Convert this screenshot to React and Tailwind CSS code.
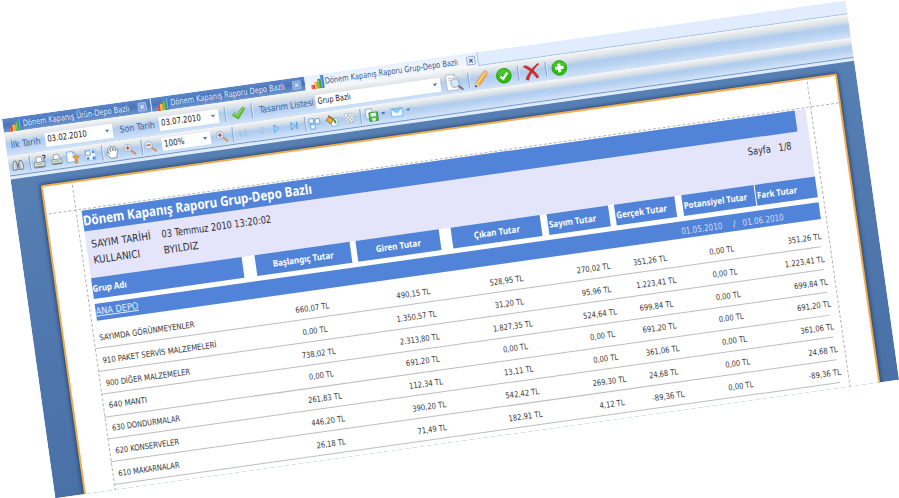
import React, { useLayoutEffect, useRef, useState } from "react";

const UI = "font-['DejaVu_Sans_Condensed','DejaVu_Sans',sans-serif]";
const HEAD = "font-['Noto_Sans',sans-serif]";

/* Single line of text condensed or expanded to a given width. */
function Fit({ w, className = "", line = "", children }) {
  const ref = useRef(null);
  const [k, setK] = useState(1);
  useLayoutEffect(() => {
    const natural = parseFloat(getComputedStyle(ref.current).width);
    if (natural > 0) setK(w / natural);
  }, [w, children]);
  return (
    <span className={`block shrink-0 ${className}`} style={{ width: w }}>
      <span
        ref={ref}
        className={`inline-block origin-left whitespace-pre align-top ${line}`}
        style={{ transform: `scaleX(${k})` }}
      >
        {children}
      </span>
    </span>
  );
}

const Sep = ({ className }) => (
  <div className={`h-[15px] w-px shrink-0 bg-[#86a8d3] shadow-[1px_0_0_#e3eefb] ${className}`} />
);

const Icon = ({ className, children, box = "0 0 16 16" }) => (
  <svg viewBox={box} className={`block shrink-0 overflow-visible ${className}`} fill="none">
    {children}
  </svg>
);

const Caret = ({ className = "" }) => (
  <svg viewBox="0 0 6 4" className={`block h-[3px] w-[5px] shrink-0 ${className}`}>
    <path d="M0 0h6L3 4z" fill="#4b7cbd" />
  </svg>
);

function Combo({ className, text, w }) {
  return (
    <div className={`flex shrink-0 items-center justify-between bg-white pl-[2px] pr-[3px] text-[#222] ${className}`}>
      <Fit w={w}>{text}</Fit>
      <Caret />
    </div>
  );
}

const Chart = ({ className }) => (
  <Icon className={`h-[13px] w-[13px] ${className}`}>
    <path d="M0 10.500h4.500V16H0z" fill="#e2482a" />
    <path d="M4 7.500h4.500V16H4z" fill="#f4a92c" />
    <path d="M8 4h4.500v12H8z" fill="#45a83d" />
    <path d="M12 0h4v16h-4z" fill="#3f7fd0" />
    <path d="M1 11.500V15M5.200 8.500V15M9.300 5v10M13.200 1v14" stroke="#fff" strokeOpacity=".5" strokeWidth=".9" />
  </Icon>
);

const Close = ({ className, dark }) => (
  <Icon className={`h-[9px] w-[9px] ${className}`} box="0 0 9 9">
    <rect x=".5" y=".5" width="8" height="8" rx="1" fill={dark ? "#7fa3da" : "#edf4fe"} stroke={dark ? "#a0bce6" : "#8fadd8"} />
    <path d="M2.700 2.700l3.600 3.600M6.300 2.700L2.700 6.300" stroke={dark ? "#dde9fa" : "#3d5f9c"} strokeWidth="1.100" />
  </Icon>
);

const Check = ({ className }) => (
  <Icon className={className}>
    <path d="M.5 9.500l3.300-2.500 2.500 2.500L13 2l3 1.500L7 15z" fill="#62c038" stroke="#439c26" strokeWidth=".6" />
    <path d="M2 9.500L4 8l2.500 3L13.500 3" stroke="#a7e37c" strokeWidth="1" />
  </Icon>
);

const Lens = ({ className, plus }) => (
  <Icon className={className}>
    <path d="M9.500 9l5.500 5.500" stroke="#c9975c" strokeWidth="2.600" strokeLinecap="round" />
    <circle cx="6" cy="5.700" r="4.800" fill="#dcebfa" stroke="#a3b3c8" strokeWidth="1.100" />
    <path d={plus ? "M3.300 5.700h5.400M6 3v5.400" : "M3.300 5.700h5.400"} stroke="#c14a3a" strokeWidth="1.600" />
  </Icon>
);

const Binoculars = ({ className }) => (
  <Icon className={className}>
    <path d="M3 2h3l1 5v7H1V9zM10 2h3l2 7v5H9V7z" fill="#c3c9d0" stroke="#6b7279" />
    <path d="M7 6h2v4H7z" fill="#6b7279" />
    <path d="M3.500 4L2.500 13M12 4l1.500 9" stroke="#f2f4f6" strokeWidth="1.200" />
  </Icon>
);

const Printer = ({ className, quick }) => (
  <Icon className={className}>
    <path d="M4 8V2h6l1 6" fill="#fff" stroke="#8a95a2" strokeWidth=".9" />
    <path d="M1.500 8h12v6h-12z" fill="#e3e7ec" stroke="#7b8590" strokeWidth=".9" />
    <path d="M2 12.500h11V14H2z" fill="#747e89" />
    <path d="M4 10.300h7" stroke="#7fb574" strokeWidth="1.200" />
    {quick && <path d="M11.500 1.500c1.800-1.500 4-.2 3 1.500-.8 1-1.500 1-1.500 2.500M13 7v1" stroke="#39434e" strokeWidth="1.300" />}
  </Icon>
);

const PageSetup = ({ className }) => (
  <Icon className={className}>
    <path d="M1 1h7l3 3v9H1z" fill="#f6faff" stroke="#7fb3e6" />
    <path d="M8 1v3h3" stroke="#7fb3e6" />
    <path d="M8 6.500c0 2 1 3 2 3V15h2.500V9.500c1.500-.3 2.500-1.500 2-3.300l-1.500 1.300-1.500-.5-.5-1.500z" fill="#f0a438" stroke="#c97c1e" strokeWidth=".7" />
  </Icon>
);

const Scale = ({ className }) => (
  <Icon className={className}>
    <path d="M1 1h14v14H1z" fill="#f3f9ff" stroke="#9cc6ee" />
    <path d="M2 2h6v6H2z" fill="#fff" stroke="#4a8fd3" />
    <path d="M10.500 10.500h4v4h-4zM10.500 2.500h3.500V6h-3.500zM2.500 10.500H6V14H2.500z" fill="#4e94d8" />
  </Icon>
);

const Hand = ({ className }) => (
  <Icon className={className}>
    <path
      d="M5 15L1 9.500c-.5-1.500 1-2 2-.8L4 10 2.500 4.500c-.2-1.500 1.500-1.700 2-.4L6 7.500 5.700 2.300c.1-1.500 1.900-1.500 2.100 0L8.500 7l1-4.500c.5-1.300 2-1 1.900.4L11 7.700l1.500-2.500c.8-1 2.200-.3 1.800.9L12.500 12l-.5 3z"
      fill="#fff"
      stroke="#7d858f"
      strokeWidth=".9"
    />
  </Icon>
);

const Arrow = ({ className, back, bar, faint }) => (
  <Icon className={className} box="0 0 10 10">
    <g transform={back ? "translate(10 0) scale(-1 1)" : undefined} opacity={faint ? 0.5 : 1}>
      <path d="M2 .8L7 5 2 9.200z" fill={faint ? "#b3d0f0" : "#a9d4fb"} stroke={faint ? "#8fb5e0" : "#55a0e6"} strokeWidth=".9" />
      {bar && <path d="M8.500.8v8.400" stroke={faint ? "#8fb5e0" : "#55a0e6"} strokeWidth="1.500" />}
    </g>
  </Icon>
);

const Pages = ({ className }) => (
  <Icon className={className}>
    <path d="M1 1h6v6H1zM9 2h6v7H9zM2 9h6v6H2z" fill="#eef6ff" stroke="#62a4e4" strokeWidth="1.100" />
    <path d="M7 3.500h2M4 7v2" stroke="#62a4e4" />
  </Icon>
);

const Bucket = ({ className }) => (
  <Icon className={className}>
    <path d="M8 5h7v10H6V9z" fill="#f4f9ff" stroke="#77a6da" />
    <path d="M0 6l5-5 5.500 5-5.500 5z" fill="#f1b33b" stroke="#8b5b1d" />
    <path d="M3 0l6 7" stroke="#5c4520" />
    <path d="M10 6c2.500 1 3.500 4 2.500 7L10 10z" fill="#369c3d" />
  </Icon>
);

const Watermark = ({ className }) => (
  <Icon className={className}>
    <path d="M1 1h10l4 4v10H1z" fill="#eef3f9" stroke="#a9bad0" />
    <path d="M2 8l6-6M2 13L12 3M5 15l9-9M10 15l4-4" stroke="#8b939e" strokeWidth="1.100" />
    <path d="M4 3l10 10M2 7l7 7" stroke="#a8b0bc" strokeWidth=".8" />
  </Icon>
);

const Export = ({ className }) => (
  <Icon className={className}>
    <path d="M1 0h8v12H1z" fill="#f2f8ff" stroke="#7fb0e4" />
    <path d="M5 5h10.500v10.500H5z" fill="#4fb545" stroke="#34902f" />
    <path d="M7 5.500h6.500v4.500H7z" fill="#eef8ea" />
    <path d="M8 12h4.500v3.500H8z" fill="#dcefd6" />
  </Icon>
);

const Mail = ({ className }) => (
  <Icon className={className}>
    <path d="M.5 3h15v11H.5z" fill="#e8f4ff" stroke="#6fb2ea" />
    <path d="M1 3.500l7 5.500 7-5.500z" fill="#8cc7f3" stroke="#6fb2ea" />
  </Icon>
);

const Preview = ({ className }) => (
  <Icon className={className}>
    <path d="M1 .5h7.500L12 4v11.500H1z" fill="#fafbfd" stroke="#b0b9c6" strokeWidth=".8" />
    <path d="M8.500.5V4H12M3 4h4M3 6h3" stroke="#b3bcc8" strokeWidth=".8" />
    <path d="M12 12l3.500 3.500" stroke="#6d747e" strokeWidth="1.900" strokeLinecap="round" />
    <circle cx="9" cy="9" r="3.900" fill="#d4e4f6" fillOpacity=".9" stroke="#a0b0c4" />
  </Icon>
);

const Pencil = ({ className }) => (
  <Icon className={className}>
    <path d="M1 15.500L2.500 11 11 1.800c1.500-1.200 4.500 1 3.300 2.900L5.500 14z" fill="#f9ae45" stroke="#dc8f35" strokeWidth=".7" />
    <path d="M4 11.500L12 3" stroke="#ffd490" strokeWidth="1.300" />
    <path d="M2.500 11L5.500 14 1 15.500z" fill="#ecd0a5" />
    <path d="M1.700 13.300L3.300 14.800 1 15.500z" fill="#3d3022" />
    <path d="M11 1.800c1.500-1.200 4.500 1 3.300 2.900l-1 .9L10 2.800z" fill="#f4b493" />
  </Icon>
);

const Disc = ({ className, plus }) => (
  <Icon className={className}>
    <circle cx="8" cy="8" r="7.400" fill="#2fbb14" stroke="#25a010" strokeWidth=".7" />
    <path d="M1.800 6.500a6.400 6.400 0 0112.400 0C11 8 5 8 1.800 6.500z" fill="#62d23f" fillOpacity=".5" />
    <path d={plus ? "M8 3.700v8.600M3.700 8h8.600" : "M4.300 8.300L7 11l4.700-5.700"} stroke="#fff" strokeWidth={plus ? 3 : 2.300} />
  </Icon>
);

const Cross = ({ className }) => (
  <Icon className={className}>
    <path d="M.5 2C5 4.500 10 9.500 12.500 15l2-1.200C12 8.500 7 3 2.500 1zM15.500.5C10 3.500 4.500 9 1.500 14.500L3.800 16C6 10 11 4.500 16 1.500z" fill="#dd2a22" stroke="#b71c17" strokeWidth=".6" />
  </Icon>
);

function Tabs() {
  const dark = "bg-linear-to-b from-[#5b87ca] via-[#4a74b8] to-[#7097d2] text-[#dfeafc]";
  return (
    <div className="flex h-[14px] shrink-0 bg-[#e1edfe] text-[8.500px] leading-[10px]">
      <div className={`flex w-[148.500px] shrink-0 items-center pl-[6px] ${dark}`}>
        <Chart className="mr-px" />
        <Fit w={107.500}>Dönem Kapanış Ürün-Depo Bazlı</Fit>
        <Close dark className="ml-[8px]" />
      </div>
      <div className={`ml-px flex w-[155.500px] shrink-0 items-center pl-[5px] ${dark}`}>
        <Chart className="mr-[1px]" />
        <Fit w={115.500}>Dönem Kapanış Raporu Depo Bazlı</Fit>
        <Close dark className="ml-[8px]" />
      </div>
      <div className="flex w-[175px] shrink-0 items-center border-r border-[#a5c2e8] bg-linear-to-b from-[#e6f0fe] to-[#f5f8fc] pl-[6px] text-[#3a5a92]">
        <Chart className="mr-[1px]" />
        <Fit w={134.500}>Dönem Kapanış Raporu Grup-Depo Bazlı</Fit>
        <Close className="ml-[8px]" />
      </div>
      <div className="flex-1 border-b border-[#9fc0ea]" />
    </div>
  );
}

const BAR =
  "bg-[linear-gradient(to_bottom,#f6f6f5_0%,#dfe5ea_22%,#c5d6e8_38%,#b0ccee_46%,#b7d1f1_65%,#d3e4f9_100%)]";

function MainBar() {
  return (
    <div className={`flex h-[23.500px] shrink-0 items-center pl-[5px] pt-[2px] text-[9.200px] leading-[11px] text-[#41629a] ${BAR}`}>
      <Fit w={30}>İlk Tarih</Fit>
      <Combo className="ml-[5px] h-[14px] w-[68px] text-[8.800px]" text="03.02.2010" w={40} />
      <Fit w={35.500} className="ml-[7px]">Son Tarih</Fit>
      <Combo className="ml-[4px] h-[14px] w-[60.500px] text-[8.800px]" text="03.07.2010" w={40} />
      <Sep className="ml-[6px]" />
      <Check className="ml-[6px] h-[14px] w-[14px]" />
      <Sep className="ml-[6px]" />
      <Fit w={55} className="ml-[6.500px]">Tasarım Listesi</Fit>
      <Combo className="ml-[2.500px] h-[14px] w-[126px] text-[8.500px]" text="Grup Bazlı" w={33.500} />
      <Preview className="ml-[5px] h-[17px] w-[17px]" />
      <Sep className="ml-[6px]" />
      <Pencil className="ml-[4px] h-[17px] w-[17px]" />
      <Disc className="ml-[6px] h-4 w-4" />
      <Sep className="ml-[6px]" />
      <Cross className="ml-[4.500px] h-4 w-4" />
      <Sep className="ml-[6px]" />
      <Disc plus className="ml-[5.500px] h-4 w-4" />
    </div>
  );
}

function PreviewBar() {
  return (
    <div className={`flex h-[19px] shrink-0 items-center pl-[3px] pt-[1px] text-[8.800px] leading-[11px] ${BAR}`}>
      <Binoculars className="h-[12px] w-[13px]" />
      <Sep className="ml-[5px]" />
      <Printer quick className="ml-[1.500px] h-[14px] w-[15px]" />
      <Printer className="ml-[3px] h-[13px] w-[14px]" />
      <PageSetup className="ml-[2.500px] h-[14px] w-[14px]" />
      <Scale className="ml-[4px] h-[12px] w-[13px]" />
      <Sep className="ml-[5px]" />
      <Hand className="ml-[3px] h-[14px] w-[14px]" />
      <Lens plus className="ml-[4px] h-[12px] w-[12px]" />
      <Sep className="ml-[6px]" />
      <Lens className="ml-[2px] h-[12px] w-[12px]" />
      <Combo className="ml-[5.500px] h-[13px] w-[49px]" text="100%" w={20.500} />
      <Lens plus className="ml-[5px] h-[12px] w-[12px]" />
      <Sep className="ml-[5px]" />
      <Arrow back bar faint className="ml-[5px] h-[9px] w-[10px]" />
      <Arrow back faint className="ml-[7.500px] h-[9px] w-[10px]" />
      <Arrow className="ml-[7px] h-[9px] w-[10px]" />
      <Arrow bar className="ml-[6.500px] h-[9px] w-[10px]" />
      <Sep className="ml-[6px]" />
      <Pages className="ml-[3.500px] h-[12px] w-[12px]" />
      <Bucket className="ml-[6px] h-[12px] w-[12px]" />
      <Watermark className="ml-[5.500px] h-[11px] w-[11px]" />
      <Sep className="ml-[5.500px]" />
      <Export className="ml-[3.500px] h-[13px] w-[13px]" />
      <Caret className="ml-[3px]" />
      <Mail className="ml-[5px] h-[12px] w-[12px]" />
      <Caret className="ml-[3px]" />
    </div>
  );
}

const HEADERS = [
  { t: "Grup Adı", w: 34.5, c: "w-[151.500px]" },
  { t: "Başlangıç Tutar", w: 61.5, c: "ml-[13px] w-[96px] justify-center" },
  { t: "Giren Tutar", w: 45.5, c: "ml-[6.500px] w-[83.500px] justify-center" },
  { t: "Çıkan Tutar", w: 46.5, c: "ml-[12.500px] w-[90px] justify-center" },
  { t: "Sayım Tutar", w: 47.5, c: "ml-[6.500px] w-[62px] pl-[1px]" },
  { t: "Gerçek Tutar", w: 51, c: "ml-[6.500px] w-[61px] pl-[1px]" },
  { t: "Potansiyel Tutar", w: 64, c: "ml-[6.500px] w-[73px] pl-[1px]" },
  { t: "Fark Tutar", w: 40.5, c: "ml-[1px] w-[61.500px] pl-[1px]" },
];

const ROWS = [
  ["SAYIMDA GÖRÜNMEYENLER", 96, "660,07 TL", "490,15 TL", "528,95 TL", "270,02 TL", "351,26 TL"],
  ["910 PAKET SERVİS MALZEMELERİ", 115, "0,00 TL", "1.350,57 TL", "31,20 TL", "95,96 TL", "1.223,41 TL"],
  ["900 DİĞER MALZEMELER", 85, "738,02 TL", "2.313,80 TL", "1.827,35 TL", "524,64 TL", "699,84 TL"],
  ["640 MANTI", 38.5, "0,00 TL", "691,20 TL", "0,00 TL", "0,00 TL", "691,20 TL"],
  ["630 DONDURMALAR", 68.5, "261,83 TL", "112,34 TL", "13,11 TL", "0,00 TL", "361,06 TL"],
  ["620 KONSERVELER", 64.5, "446,20 TL", "390,20 TL", "542,42 TL", "269,30 TL", "24,68 TL"],
  ["610 MAKARNALAR", 61.5, "26,18 TL", "71,49 TL", "182,91 TL", "4,12 TL", "-89,36 TL"],
];

const textWidth = (s) => (s[0] === "-" ? 32.5 : s.length > 9 ? 40 : 25 + (s.length - 7) * 4.5);

const Value = ({ v, className }) => (
  <div className={`flex shrink-0 ${className}`}>
    <Fit w={textWidth(v)}>{v}</Fit>
  </div>
);

function Report() {
  return (
    <div className="pl-[35px] pt-[29px]">
      <div className="h-[68.500px] w-[731px] bg-[#e4e4fa] text-[10.400px] leading-[12px] text-[#2e2e34]">
        <div className={`flex h-[21.500px] w-[720px] items-center bg-[#5184d8] text-[13.600px] leading-[18px] font-bold text-white ${HEAD}`}>
          <Fit w={231}>Dönem Kapanış Raporu Grup-Depo Bazlı</Fit>
        </div>
        <div className="flex pl-[5px] pt-[6.500px]">
          <Fit w={60}>SAYIM TARİHİ</Fit>
          <Fit w={110.500} className="ml-[11px]">03 Temmuz 2010 13:20:02</Fit>
          <Fit w={23} className="ml-[481px]">Sayfa</Fit>
          <Fit w={13} className="ml-[8px]">1/8</Fit>
        </div>
        <div className="flex pl-[5px] pt-[4px]">
          <Fit w={47}>KULLANICI</Fit>
          <Fit w={35} className="ml-[23.500px]">BYILDIZ</Fit>
        </div>
      </div>
      <div className={`flex h-[21px] text-[9px] leading-[12px] font-bold text-white ${HEAD}`}>
        {HEADERS.map((h) => (
          <div key={h.t} className={`flex shrink-0 items-center bg-[#5184d8] pt-px ${h.c}`}>
            <Fit w={h.w}>{h.t}</Fit>
          </div>
        ))}
      </div>
      <div className="mt-[5px] flex h-[16.500px] w-[731px] items-center bg-[#5184d8] text-[9.600px] leading-[12px] text-[#e3ecfd]">
        <Fit w={43} line="underline">ANA DEPO</Fit>
        <div className="ml-[547.500px] flex pt-[4px] text-[9.200px] text-[#cfdefa]">
          <Fit w={41.500}>01.05.2010</Fit>
          <Fit w={3} className="ml-[11px]">/</Fit>
          <Fit w={41.500} className="ml-[7px]">01.06.2010</Fit>
        </div>
      </div>
      <div className="-ml-[6px] w-[732.500px] pt-[6px] text-[8.200px] leading-[10px] text-[#37373c]">
        {ROWS.map(([name, w, ...v]) => (
          <div key={name} className="flex h-[22.770px] items-end border-b border-[#bdbdbf] pb-[5.300px] pl-[5.500px]">
            <div className="w-[185px] shrink-0">
              <Fit w={w}>{name}</Fit>
            </div>
            <Value v={v[0]} className="w-[60px] justify-center" />
            <Value v={v[1]} className="ml-[42px] w-[60px] justify-center" />
            <Value v={v[2]} className="ml-[34px] w-[60px] justify-center" />
            <Value v={v[3]} className="ml-[28px] w-[60px] justify-center" />
            <Value v={v[4]} className="ml-[10px] w-[60px]" />
            <Value v="0,00 TL" className="ml-[12.500px] w-[30px] justify-end" />
            <Value v={v[4]} className="ml-[38px] w-[50px] justify-end" />
          </div>
        ))}
      </div>
    </div>
  );
}

export default function App() {
  return (
    <div className={`h-[498px] w-[899px] overflow-hidden bg-white pl-[2px] pt-[119.300px] ${UI}`}>
      <div className="flex h-[383px] w-[852px] origin-top-left rotate-[-8deg] flex-col overflow-hidden">
        <Tabs />
        <MainBar />
        <PreviewBar />
        <div className="h-[4px] shrink-0 border-t border-[#6f94c8] bg-[#dfebfb]" />
        <div className="flex-1 overflow-hidden bg-linear-to-b from-[#567fb4] to-[#4970a7] pl-[29px] pt-[10px]">
          <div className="relative h-[340px] w-[803.500px] rounded-t-[2px] border-2 border-[#f1ac50] bg-white shadow-[0_0_4px_1px_#27446f]">
            <Report />
            <div className="absolute left-[28.500px] top-[2px] h-[309px] border-l border-dashed border-[#b4b4b4]" />
            <div className="absolute right-[28px] top-[2px] h-[309px] border-l border-dashed border-[#b4b4b4]" />
            <div className="absolute left-[2px] right-0 top-[27.500px] border-t border-dashed border-[#b4b4b4]" />
          </div>
        </div>
      </div>
    </div>
  );
}
